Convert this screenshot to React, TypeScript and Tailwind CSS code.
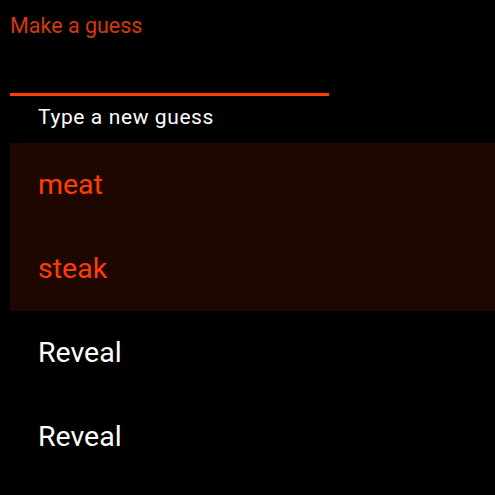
const guesses = ['meat', 'steak'];
const hidden = ['Reveal', 'Reveal'];

export default function App() {
  return (
    <div className="min-h-screen w-full bg-black pl-[10px] font-['Roboto',sans-serif]">
      <div className="w-[319px]">
        <label className="block pt-[13px] text-[21.5px] leading-[25px] text-[#d6390b]">Make a guess</label>
        <input
          className="mt-[30px] block h-[25px] w-full bg-transparent text-[21px] text-white outline-none"
          aria-label="Make a guess"
        />
        <div className="h-[3px] w-full bg-[#ff3d00]" />
      </div>
      <p className="mt-[9px] pl-[28px] text-[21px] leading-[25px] tracking-[0.6px] text-white">Type a new guess</p>

      <ul className="mt-[13px]">
        <div className="bg-[#1f0701]">
          {guesses.map((g) => (
            <li key={g} className="flex h-[84px] items-center pl-[28px] text-[28.5px] text-[#ff3d00]">
              {g}
            </li>
          ))}
        </div>
        {hidden.map((h, i) => (
          <li key={i} className="flex h-[84px] items-center pl-[28px] text-[28.5px] text-white">
            {h}
          </li>
        ))}
      </ul>
    </div>
  );
}
